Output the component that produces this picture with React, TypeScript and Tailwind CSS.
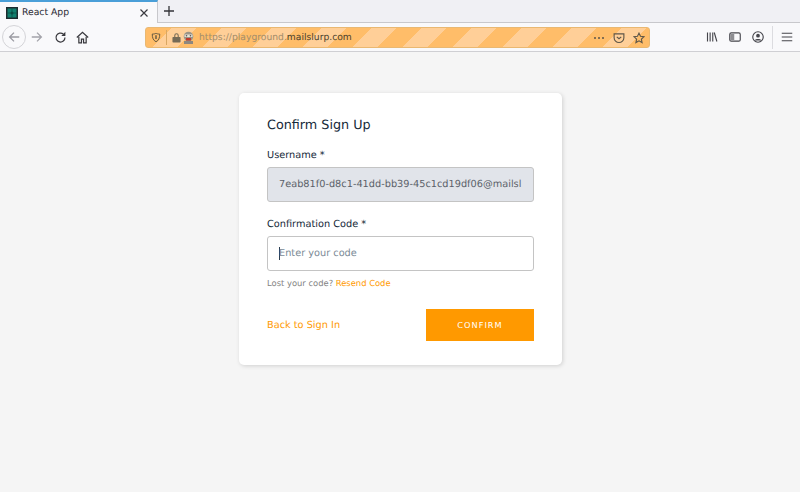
import React from "react";

function Ic({ children, w = 16, h = 16, cls = "" }: { children: React.ReactNode; w?: number; h?: number; cls?: string }) {
  return (
    <svg width={w} height={h} viewBox="0 0 16 16" fill="none" stroke="currentColor" strokeWidth={1.5} className={cls}>
      {children}
    </svg>
  );
}

export default function App() {
  return (
    <div className="w-[800px] h-[492px] overflow-hidden flex flex-col bg-[#f5f5f5] font-['DejaVu_Sans',sans-serif] [text-rendering:geometricPrecision]">
      {/* Tab strip */}
      <div className="h-[23px] flex bg-[#f0f0f4] shrink-0">
        <div className="w-[158px] h-[23px] bg-[#f9f9fb] border-t-2 border-t-[#4a9fd8] border-r border-r-[#c8c8cc] flex items-center pl-[6px] pr-[8px]">
          <svg width="12" height="12" viewBox="0 0 12 12" className="shrink-0">
            <rect width="12" height="12" fill="#1d2b2f" />
            <rect x="1.500" y="1.500" width="9" height="9" fill="#12806f" />
            <circle cx="6" cy="6" r="1.500" fill="#0d4a44" />
            <path d="M1.500 6h9M6 1.500v9" stroke="#0d4a44" strokeWidth="0.700" />
          </svg>
          <span className="ml-[4px] text-[9.250px] text-[#2b2a33] flex-1">React App</span>
          <svg width="10" height="10" viewBox="0 0 10 10" stroke="#3a3a40" strokeWidth="1.200" fill="none">
            <path d="M1.500 1.500l7 7M8.500 1.500l-7 7" />
          </svg>
        </div>
        <div className="flex-1 border-b border-b-[#c8c8cc] flex items-center pl-[5px]">
          <svg width="12" height="12" viewBox="0 0 12 12" stroke="#333338" strokeWidth="1.300" fill="none">
            <path d="M6 1v10M1 6h10" />
          </svg>
        </div>
      </div>
      {/* Nav bar */}
      <div className="h-[29px] bg-[#f9f9fb] border-b border-b-[#cfcfd3] flex items-center shrink-0 relative">
        <div className="ml-[2px] w-[24px] h-[24px] rounded-full border border-[#d4d4d8] flex items-center justify-center text-[#9a9aa2]">
          <Ic w={14} h={14}><path d="M14 8H3M8 3L3 8l5 5" /></Ic>
        </div>
        <div className="ml-[4px] text-[#a3a3aa] flex"><Ic w={14} h={14}><path d="M2 8h11M8 3l5 5-5 5" /></Ic></div>
        <div className="ml-[10px] text-[#38383d] flex">
          <Ic w={13} h={13}><path d="M13.500 8a5.500 5.500 0 1 1-2-4.200" /><path d="M14 1v5H9z" fill="currentColor" stroke="none" /></Ic>
        </div>
        <div className="ml-[9px] text-[#38383d] flex">
          <Ic w={13} h={13}><path d="M1 8l7-6.500L15 8" /><path d="M3.500 7v7.500h3.200V10h2.600v4.500h3.200V7" /></Ic>
        </div>
        {/* URL bar */}
        <div className="absolute left-[145px] top-[4px] w-[505px] h-[21px] rounded-[3px] border border-[#e9b872] flex items-center bg-[repeating-linear-gradient(135deg,#ffbd69_0,#ffbd69_17.680px,#ffcf98_17.680px,#ffcf98_35.360px)]">
          <div className="ml-[5px] text-[#5c5340] flex"><Ic w={10} h={11}><path d="M2 2.500C5 2.500 6.500 2 8 1.200c1.500.8 3 1.300 6 1.300 0 6-1.500 10-6 12.300C3.500 12.500 2 8.500 2 2.500z" /><path d="M8 4.500v6" strokeWidth="2.200" /></Ic></div>
          <div className="ml-[5px] w-px h-[15px] bg-[#d9a763]" />
          <div className="ml-[5px] text-[#756a56] flex">
            <svg width="9" height="11" viewBox="0 0 10 11" fill="currentColor"><path d="M2.500 5V3.200a2.500 2.500 0 0 1 5 0V5H6.300V3.200a1.300 1.300 0 0 0-2.600 0V5z" /><rect x="0.500" y="5" width="9" height="6" rx="0.800" /></svg>
          </div>
          <svg width="13" height="13" viewBox="0 0 13 13" className="ml-[1px]">
            <circle cx="6.500" cy="5.500" r="4.800" fill="#9b9488" />
            <rect x="2.500" y="3.500" width="8" height="2.500" fill="#e8e4d8" />
            <circle cx="4.500" cy="4.800" r="0.800" fill="#555" />
            <circle cx="8.500" cy="4.800" r="0.800" fill="#555" />
            <rect x="4" y="7" width="5" height="2.500" fill="#c0392b" />
            <rect x="2" y="10" width="9" height="3" fill="#8d8880" />
          </svg>
          <span className="ml-[4px] text-[9.200px] leading-none text-[#a28d6c]">
            https://playground.<span className="text-[#4a3f2e]">mailslurp.com</span>
          </span>
          <div className="flex-1" />
          <div className="flex gap-[2px] mr-[9px]">
            <span className="w-[2px] h-[2px] rounded-full bg-[#5e5648]" />
            <span className="w-[2px] h-[2px] rounded-full bg-[#5e5648]" />
            <span className="w-[2px] h-[2px] rounded-full bg-[#5e5648]" />
          </div>
          <div className="mr-[8px] text-[#5e5648] flex">
            <Ic w={12} h={12}><path d="M1.500 2.500h13v5a6.500 6.500 0 0 1-13 0z" /><path d="M5 6.500l3 2.500 3-2.500" /></Ic>
          </div>
          <div className="mr-[4px] text-[#5e5648] flex">
            <Ic w={12} h={12}><path d="M8 1.500l2 4.200 4.600.6-3.400 3.200.9 4.600L8 11.800 3.900 14.100l.9-4.600L1.400 6.300 6 5.700z" /></Ic>
          </div>
        </div>
        {/* Right toolbar */}
        <div className="absolute right-0 top-0 h-[28px] flex items-center text-[#45454b]">
          <Ic w={12} h={12}><path d="M2 2v12M5.500 2v12M9 2v12M11 2l3.500 12" /></Ic>
          <div className="ml-[11px] flex"><Ic w={12} h={12}><rect x="1" y="2.500" width="14" height="11" rx="2" /><rect x="2" y="4" width="5" height="8" fill="currentColor" stroke="none" opacity="0.600" /></Ic></div>
          <div className="ml-[11px] flex"><Ic w={12} h={12}><circle cx="8" cy="8" r="7" /><circle cx="8" cy="6.300" r="2.500" fill="currentColor" stroke="none" /><path d="M3.500 12.500c1.500-2.500 7.500-2.500 9 0" fill="currentColor" stroke="none" /></Ic></div>
          <div className="ml-[8px] w-px h-[23px] bg-[#dcdce0]" />
          <div className="ml-[8px] mr-[7px] flex"><Ic w={12} h={12}><path d="M1 3h14M1 8h14M1 13h14" /></Ic></div>
        </div>
      </div>
      {/* Page */}
      <div className="flex-1 flex justify-center items-start pt-[41px] pl-px">
        <div className="w-[323px] h-[272px] bg-white rounded-[5px] shadow-[1px_1px_4px_0_rgba(0,0,0,0.15)] px-[28px] pt-[24px] flex flex-col">
          <div className="text-[12.750px] leading-[17px] text-[#152939]">Confirm Sign Up</div>
          <label className="mt-[15px] text-[9.750px] leading-[13px] text-[#152939]">Username *</label>
          <div className="mt-[5px] h-[35px] rounded-[3px] border border-[#c4c4c4] bg-[#e1e4ea] pl-[11px] pt-[1px] flex items-center whitespace-nowrap text-[9.750px] text-[#5a5f68]">
            7eab81f0-d8c1-41dd-bb39-45c1cd19df06@mailsl
          </div>
          <label className="mt-[16px] text-[9.750px] leading-[13px] text-[#152939]">Confirmation Code *</label>
          <div className="mt-[5px] h-[35px] rounded-[3px] border border-[#c4c4c4] bg-white pl-[11px] flex items-center text-[9.750px] text-[#7b8a96]">
            <span className="w-px h-[13px] bg-[#2c3e50] mr-[-1px]" />
            <span className="pt-[1px]">Enter your code</span>
          </div>
          <div className="mt-[7px] text-[8.400px] leading-[11px] text-[#828282]">
            Lost your code? <span className="text-[#ff9900]">Resend Code</span>
          </div>
          <div className="mt-[20px] flex items-center justify-between">
            <span className="pt-[2px] text-[9.750px] text-[#ff9900]">Back to Sign In</span>
            <div className="w-[108px] h-[32px] bg-[#ff9900] flex items-center justify-center text-white text-[8.250px] tracking-[1px]">CONFIRM</div>
          </div>
        </div>
      </div>
    </div>
  );
}
